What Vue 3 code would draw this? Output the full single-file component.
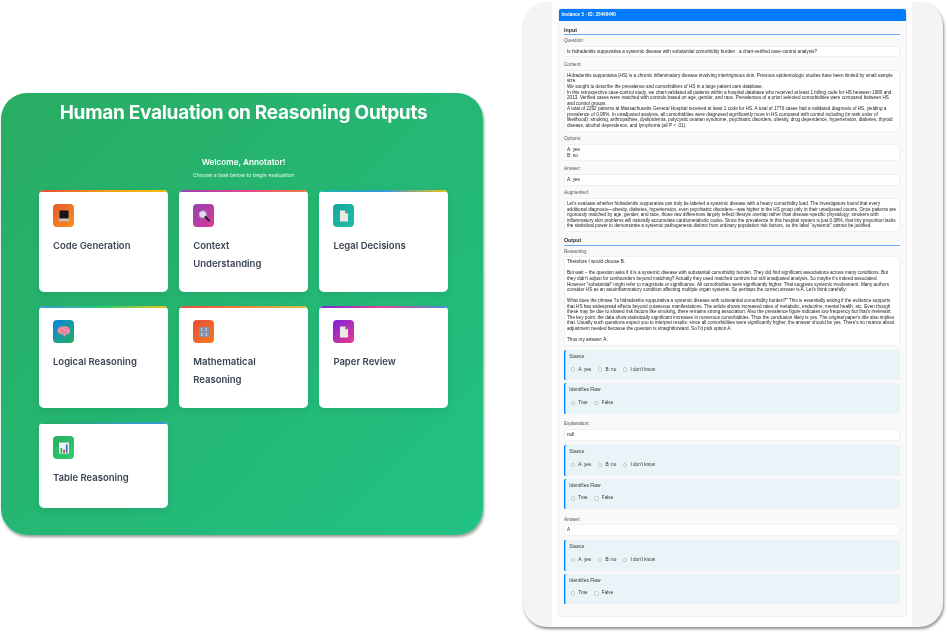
<script setup>
const tasks = [
  { name: 'Code Generation', icon: 'laptop', bg: 'linear-gradient(135deg, #e8562f, #f7941d)', strip: 'linear-gradient(90deg, #e74c3c, #f39c12, #f1c40f)' },
  { name: 'Context Understanding', icon: 'search', bg: 'linear-gradient(135deg, #8e44ad, #e0399a)', strip: 'linear-gradient(90deg, #8e44ad, #e84393, #f0803c)' },
  { name: 'Legal Decisions', icon: 'doc', bg: 'linear-gradient(135deg, #16a5a5, #20bf9f)', strip: 'linear-gradient(90deg, #1abc9c, #3498db, #f1c40f)' },
  { name: 'Logical Reasoning', icon: 'brain', bg: 'linear-gradient(135deg, #0a84e0, #27ae60)', strip: 'linear-gradient(90deg, #3498db, #2ecc71, #f1c40f)' },
  { name: 'Mathematical Reasoning', icon: 'abacus', bg: 'linear-gradient(135deg, #e74c3c, #f9791c)', strip: 'linear-gradient(90deg, #e74c3c, #f0803c, #c8c83c)' },
  { name: 'Paper Review', icon: 'doc', bg: 'linear-gradient(135deg, #7b1fe0, #e83e8c)', strip: 'linear-gradient(90deg, #6c2bd9, #e84393, #3498db)' },
  { name: 'Table Reasoning', icon: 'chart', bg: 'linear-gradient(135deg, #27ae60, #2ecc71)', strip: 'linear-gradient(90deg, #27ae60, #3498db)' }
]

const optionsText = 'A: yes\nB: no'

const contextText = `Hidradenitis suppurativa (HS) is a chronic inflammatory disease involving intertriginous skin. Previous epidemiologic studies have been limited by small sample size.
We sought to describe the prevalence and comorbidities of HS in a large patient care database.
In this retrospective case-control study, we chart-validated all patients within a hospital database who received at least 1 billing code for HS between 1980 and 2013. Verified cases were matched with controls based on age, gender, and race. Prevalences of a priori selected comorbidities were compared between HS and control groups.
A total of 2292 patients at Massachusetts General Hospital received at least 1 code for HS. A total of 1776 cases had a validated diagnosis of HS, yielding a prevalence of 0.08%. In unadjusted analysis, all comorbidities were diagnosed significantly more in HS compared with control including (in rank order of likelihood): smoking, arthropathies, dyslipidemia, polycystic ovarian syndrome, psychiatric disorders, obesity, drug dependence, hypertension, diabetes, thyroid disease, alcohol dependence, and lymphoma (all P < .01).`

const augmentedText = `Let's evaluate whether hidradenitis suppurativa can truly be labeled a systemic disease with a heavy comorbidity load. The investigators found that every additional diagnosis—obesity, diabetes, hypertension, even psychiatric disorders—was higher in the HS group only in their unadjusted counts. Once patients are rigorously matched by age, gender, and race, those raw differences largely reflect lifestyle overlap rather than disease-specific physiology; smokers with inflammatory skin problems will naturally accumulate cardiometabolic codes. Since the prevalence in this hospital system is just 0.08%, that tiny proportion lacks the statistical power to demonstrate a systemic pathogenesis distinct from ordinary population risk factors, so the label “systemic” cannot be justified.`

const reasoningText = `Therefore I would choose B.

But wait – the question asks if it is a systemic disease with substantial comorbidity burden. They did find significant associations across many conditions. But they didn't adjust for confounders beyond matching? Actually they used matched controls but still unadjusted analysis. So maybe it's indeed associated. However "substantial" might refer to magnitude or significance. All comorbidities were significantly higher. That suggests systemic involvement. Many authors consider HS as an autoinflammatory condition affecting multiple organ systems. So perhaps the correct answer is A. Let's think carefully:

What does the phrase "Is hidradenitis suppurativa a systemic disease with substantial comorbidity burden?" This is essentially asking if the evidence supports that HS has widespread effects beyond cutaneous manifestations. The article shows increased rates of metabolic, endocrine, mental health, etc. Even though these may be due to shared risk factors like smoking, there remains strong association. Also the prevalence figure indicates low frequency but that's irrelevant. The key point: the data show statistically significant increases in numerous comorbidities. Thus the conclusion likely is yes. The original paper's title also implies that. Usually such questions expect you to interpret results: since all comorbidities were significantly higher, the answer should be yes. There's no nuance about adjustment needed because the question is straightforward. So I'd pick option A.

Thus my answer: A.`

const outputs = [
  { label: 'Reasoning:', text: reasoningText },
  { label: 'Explanation:', text: 'null' },
  { label: 'Answer:', text: 'A' }
]
</script>

<template>
  <div class="stage">
    <section class="home">
      <h1>Human Evaluation on Reasoning Outputs</h1>
      <div class="welcome">
        <h2>Welcome, Annotator!</h2>
        <p>Choose a task below to begin evaluation</p>
      </div>
      <div class="task-grid">
        <div v-for="task in tasks" :key="task.name" class="task-card">
          <span class="strip" :style="{ background: task.strip }"></span>
          <span class="task-icon" :style="{ background: task.bg }">
            <svg v-if="task.icon === 'laptop'" viewBox="0 0 14 14" width="14" height="14">
              <rect x="2.5" y="1.5" width="9" height="7.5" fill="#15151a" />
              <path d="M2.5 9h9v1H2.5z" fill="#777" />
              <rect x="1.5" y="10" width="11" height="2.2" rx=".4" fill="#c4c0bb" />
            </svg>
            <svg v-else-if="task.icon === 'search'" viewBox="0 0 14 14" width="14" height="14">
              <circle cx="5.8" cy="5.4" r="3.5" fill="#e5dcee" stroke="#bdb3c6" stroke-width="1" />
              <path d="M8.4 8l3.6 3.7" stroke="#1c1c22" stroke-width="1.8" stroke-linecap="round" />
            </svg>
            <svg v-else-if="task.icon === 'doc'" viewBox="0 0 14 14" width="14" height="14">
              <path d="M3 1.5h5.2L11 4.3v8.2H3z" fill="#ece8e4" />
              <path d="M8.2 1.5V4.3H11z" fill="#77757a" />
            </svg>
            <svg v-else-if="task.icon === 'brain'" viewBox="1.5 2 11 11" width="14" height="14">
              <path d="M2 6.4C2 4.3 4 3 6 3.3 7.5 2.8 10 3 11.2 4.6c1.2 1.5.9 3.6-.7 4.3-.8.4-1.5.3-2.1.6-.4.8-.4 1.5-1 1.5s-.8-1-1.2-1.6C4.8 9.5 2 9 2 6.4z" fill="#ee8fa5" />
              <path d="M4 6.3c1-.8 2-.5 2.7 0M7.5 5c.9-.5 1.8-.3 2.4.4M5.5 8c1-.5 2-.4 3 0" stroke="#c9607c" stroke-width=".5" fill="none" />
            </svg>
            <svg v-else-if="task.icon === 'abacus'" viewBox="0 0 14 14" width="14" height="14">
              <rect x="2" y="2" width="10" height="10" rx="1" fill="#8094b0" />
              <text x="4.8" y="6.2" class="key">1</text>
              <text x="9.2" y="6.2" class="key">2</text>
              <text x="4.8" y="10.8" class="key">3</text>
              <text x="9.2" y="10.8" class="key">4</text>
            </svg>
            <svg v-else viewBox="0 0 14 14" width="14" height="14">
              <rect x="2" y="1.5" width="10" height="11" fill="#f2f2f2" />
              <rect x="3.5" y="7" width="1.7" height="4.8" fill="#2fa84f" />
              <rect x="6.2" y="8.6" width="1.7" height="3.2" fill="#d9382e" />
              <rect x="8.9" y="3.5" width="1.7" height="8.3" fill="#2f6fd0" />
            </svg>
          </span>
          <span class="task-name">{{ task.name }}</span>
        </div>
      </div>
    </section>

    <section class="review">
      <div class="column">
        <div class="instance">
          <div class="instance-head">Instance 5 - ID: 25440440</div>
          <div class="instance-body">
            <h3>Input</h3>
            <div class="label first">Question:</div>
            <div class="box">Is hidradenitis suppurativa a systemic disease with substantial comorbidity burden : a chart-verified case-control analysis?</div>
            <div class="label">Context:</div>
            <div class="box">{{ contextText }}</div>
            <div class="label">Options:</div>
            <div class="box">{{ optionsText }}</div>
            <div class="label">Answer:</div>
            <div class="box">A: yes</div>
            <div class="label">Augmented:</div>
            <div class="box">{{ augmentedText }}</div>

            <h3 class="output-title">Output</h3>
            <div v-for="(item, i) in outputs" :key="item.label" class="output-item">
              <div class="label" :class="{ first: i === 0 }">{{ item.label }}</div>
              <div class="box">{{ item.text }}</div>
              <div class="question">
                <div class="q-title">Stance</div>
                <div class="choices">
                  <label><input type="radio" :name="'stance' + i" />A: yes</label>
                  <label><input type="radio" :name="'stance' + i" />B: no</label>
                  <label><input type="radio" :name="'stance' + i" />I don't know</label>
                </div>
              </div>
              <div class="question">
                <div class="q-title">Identifies Flaw</div>
                <div class="choices">
                  <label><input type="radio" :name="'flaw' + i" />True</label>
                  <label><input type="radio" :name="'flaw' + i" />False</label>
                </div>
              </div>
            </div>
          </div>
        </div>
      </div>
    </section>
  </div>
</template>

<style scoped>
.stage {
  display: flex;
  align-items: flex-start;
  gap: 40px;
  width: 947px;
  height: 632px;
  padding: 2px 0 0 1px;
  box-sizing: border-box;
  overflow: hidden;
  background: #fff;
}

.home {
  width: 482px;
  height: 442px;
  margin-top: 91px;
  flex-shrink: 0;
  box-sizing: border-box;
  padding: 8px 35px 0 38px;
  border-radius: 26px;
  background: linear-gradient(135deg, #29ac63, #21c284);
  box-shadow: 1px 2px 3px rgba(0, 0, 0, 0.4);
  font-family: Inter, "Liberation Sans", sans-serif;
  filter: blur(0.4px);
}

h1 {
  margin: 0;
  text-align: center;
  color: #fff;
  font-size: 19px;
  letter-spacing: -0.27px;
  line-height: 24px;
  font-weight: 700;
}

.welcome {
  margin-top: 32px;
  text-align: center;
  color: #fff;
}

.welcome h2 {
  margin: 0;
  font-size: 8.2px;
  line-height: 11px;
  font-weight: 600;
}

.welcome p {
  margin: 2px 0 0;
  font-size: 5.3px;
  line-height: 10px;
  opacity: 0.9;
}

.task-grid {
  display: grid;
  grid-template-columns: repeat(3, 128.7px);
  grid-template-rows: 102px 102px 86px;
  gap: 14px 11.5px;
  margin-top: 10px;
}

.task-card {
  position: relative;
  display: flex;
  flex-direction: column;
  align-items: flex-start;
  box-sizing: border-box;
  padding: 14px 14px 0;
  background: #fff;
  border-radius: 5px;
  overflow: hidden;
  box-shadow: 0 3px 8px rgba(0, 0, 0, 0.08);
}

.strip {
  position: absolute;
  top: 0;
  left: 0;
  right: 0;
  height: 1.5px;
}

.task-icon {
  display: flex;
  align-items: center;
  justify-content: center;
  width: 21px;
  height: 23px;
  border-radius: 4px;
}

.key {
  font-size: 3.4px;
  fill: #fff;
  text-anchor: middle;
  font-family: "Liberation Sans", sans-serif;
}

.task-name {
  margin-top: 10px;
  font-size: 9.5px;
  line-height: 18px;
  font-weight: 600;
  color: #3b4454;
}

.review {
  width: 420px;
  height: 625px;
  flex-shrink: 0;
  display: flex;
  justify-content: center;
  padding-right: 2px;
  box-sizing: border-box;
  border-radius: 24px;
  background: #f4f4f4;
  box-shadow: 1px 2px 3px rgba(0, 0, 0, 0.45);
  overflow: hidden;
  font-family: "Liberation Sans", Arial, sans-serif;
  filter: blur(0.3px);
}

.column {
  width: 360px;
  height: 100%;
  box-sizing: border-box;
  padding: 6px 5.5px 0;
  background: #fff;
}

.instance {
  border: 1px solid #eeeeee;
  border-radius: 2px;
  background: #f9f9f9;
}

.instance-head {
  height: 12px;
  padding-left: 3px;
  background: #007bff;
  border-radius: 2px 2px 0 0;
  color: #fff;
  font-size: 4.6px;
  line-height: 12px;
  font-weight: 700;
}

.instance-body {
  padding: 5.5px 5.5px 12px;
}

h3 {
  margin: 0;
  height: 7.5px;
  border-bottom: 1px solid #6aaef5;
  font-size: 5.3px;
  line-height: 6px;
  font-weight: 700;
  color: #333;
}

.output-title {
  margin-top: 5.25px;
}

.label {
  margin-top: 4.8px;
  margin-bottom: 1.5px;
  font-size: 4.65px;
  line-height: 6px;
  color: #555;
}

.label.first {
  margin-top: 3px;
}

.box {
  padding: 2.2px 2px;
  background: #fff;
  border: 1px solid #f0f0f0;
  border-radius: 1.5px;
  font-size: 4.65px;
  line-height: 5.55px;
  color: #222;
  white-space: pre-wrap;
}

.output-item + .output-item {
  margin-top: 7.5px;
}

.question {
  margin-top: 3px;
  padding: 4px 4px 5px 5.3px;
  height: 30.5px;
  box-sizing: border-box;
  background: #e8f4f8;
  box-shadow: inset 1.3px 0 0 #007bff;
  border-radius: 1.5px;
}

.box + .question {
  margin-top: 4.2px;
}

.q-title {
  font-size: 4.9px;
  line-height: 6px;
  font-weight: 500;
  color: #333;
}

.choices {
  display: flex;
  gap: 6.7px;
  margin-top: 6.7px;
  padding-left: 1.5px;
  font-size: 4.65px;
  line-height: 6px;
  color: #333;
}

.choices label {
  display: flex;
  align-items: center;
  gap: 3px;
}

.choices input {
  appearance: none;
  box-sizing: border-box;
  width: 4.5px;
  height: 4.5px;
  margin: 0;
  background: #fff;
  border: 1px solid #c4c4c4;
  border-radius: 50%;
}
</style>

<style>
html,
body {
  margin: 0;
  background: #fff;
}
</style>
